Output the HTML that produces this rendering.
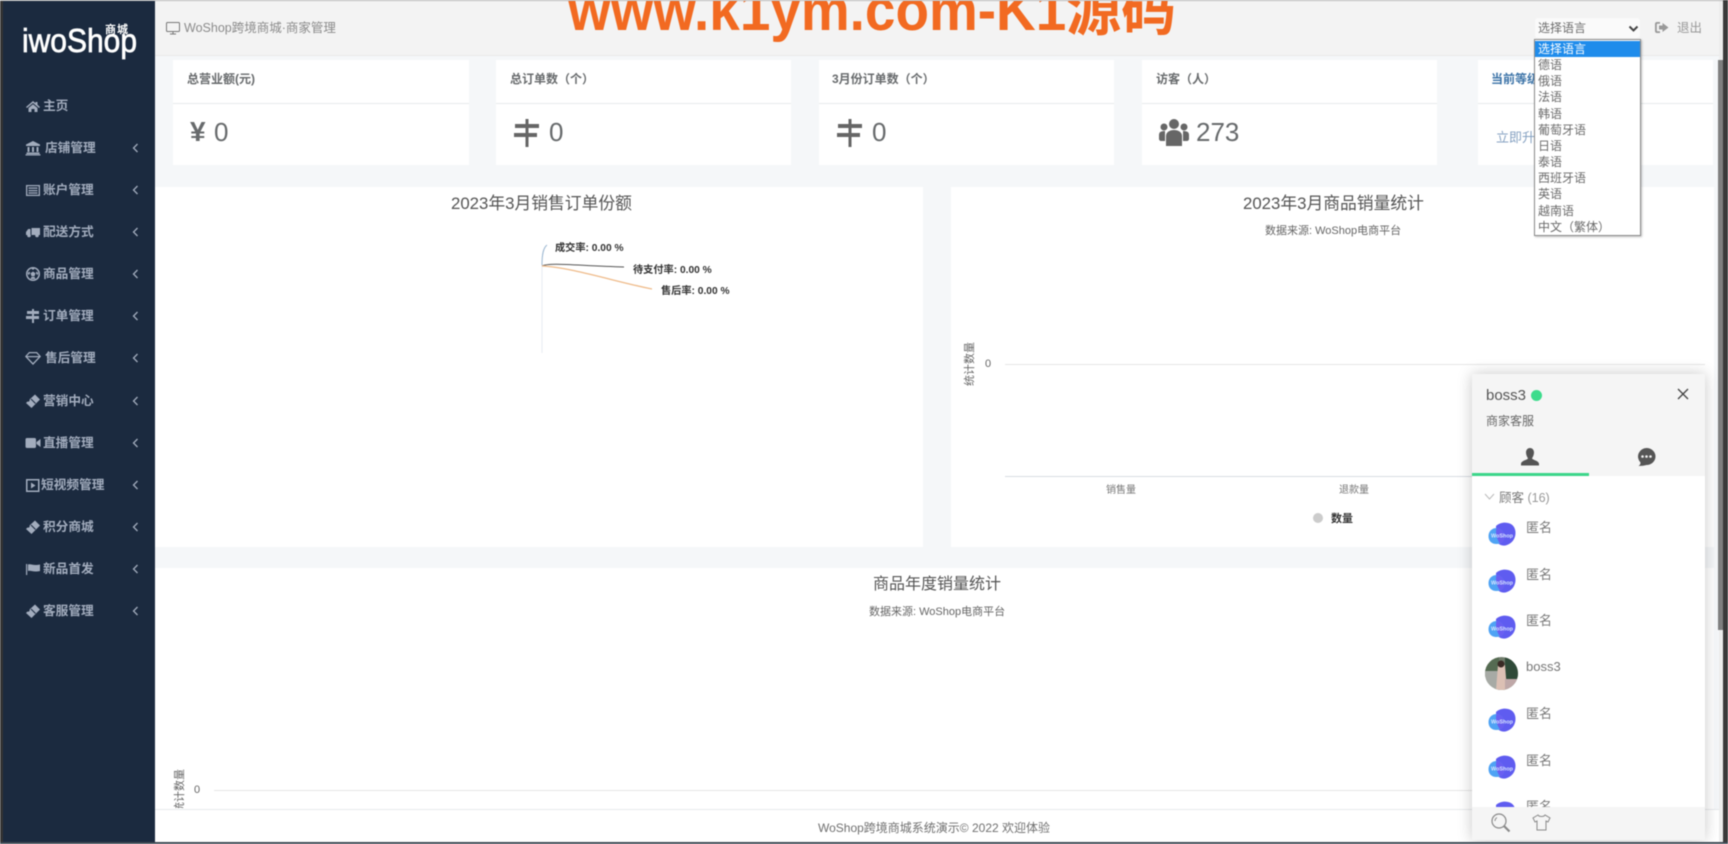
<!DOCTYPE html>
<html lang="zh-CN"><head><meta charset="utf-8"><title>WoShop</title>
<style>
html,body{margin:0;padding:0;width:1728px;height:844px;overflow:hidden;background:#fff}
#w{position:absolute;left:0;top:0;width:1728px;height:844px;overflow:hidden;background:#fff;font-family:"Liberation Sans","Noto Sans CJK SC",sans-serif;color:#676a6c;filter:blur(.45px)}
#w div,#w span.a,#w svg.a{position:absolute}
.t{white-space:nowrap;line-height:18px}
.card{background:#fff}
.m{left:0;width:155px;height:20px;color:#a2acbd;font-size:12.700px;font-weight:700;line-height:20px}
.m svg{position:absolute;left:25px;top:2px;width:16px;height:16px;fill:#a2acbd}
.m span{position:absolute;top:0;white-space:nowrap}
.m svg.c{left:132px;top:5px;width:7px;height:10px;fill:none;stroke:#a2acbd;stroke-width:1.3}
.l{left:0;width:105px;height:16px;line-height:16px;font-size:12px;padding-left:3px;color:#6b6b6b;white-space:nowrap}
.n{left:54px;font-size:13px;color:#777;line-height:16px;white-space:nowrap}
.av{left:16px;width:28px;height:24px}
</style></head><body><div id="w">
<svg width="0" height="0" style="position:absolute"><defs>
<symbol id="home" viewBox="0 0 16 16"><path d="M8 3 1 9l1 1 6-5 6 5 1-1-2.500-2.200V4h-2v1.100zM3.500 10v4h3v-3h3v3h3v-4L8 6.200z"/></symbol>
<symbol id="bank" viewBox="0 0 16 16"><path d="M8 1 1 4.500V6h14V4.500zM2.500 7h2v5h-2zM7 7h2v5H7zM11.500 7h2v5h-2zM1.500 12.500h13V14h-13zM.500 14.300h15V15.500H.500z"/></symbol>
<symbol id="card" viewBox="0 0 16 16"><path fill-rule="evenodd" d="M1 3h14v11H1zM2.300 4.300v8.400h11.400V4.300z"/><path d="M3.500 5.500h9v1.200h-9zM3.500 8h9v1.200h-9zM3.500 10.400h9v1.200h-9z"/></symbol>
<symbol id="truck" viewBox="0 0 16 16"><path d="M6.500 4H15v7H6.500zM1 8l2.200-3H5.500v6H1z"/><circle cx="4" cy="11.500" r="1.800"/><circle cx="12" cy="11.500" r="1.800"/></symbol>
<symbol id="ball" viewBox="0 0 16 16"><path fill-rule="evenodd" d="M8 1a7 7 0 1 0 0 14A7 7 0 0 0 8 1zm0 1.500a5.500 5.500 0 1 1 0 11 5.500 5.500 0 0 1 0-11z"/><path d="M8 5.500 10.500 7.300 9.500 10.300h-3L5.500 7.300zM6.300 2.500h3.400L8 4zM2.600 7l2-1.500.5 1.700-1.500 2zM13.400 7l-2-1.500-.5 1.700 1.500 2zM5.500 13l1-2.100h3l1 2.100z"/></symbol>
<symbol id="sign" viewBox="0 0 16 16"><path d="M7 1h2v14H7zM2 3h12v3H2zM1 8h13v3H1z"/></symbol>
<symbol id="dia" viewBox="0 0 16 16"><path fill-rule="evenodd" d="M4 2h8l4 4.500L8 15 0 6.500zM4.600 3.200 2 6h12l-2.600-2.800zM2.500 7.200 8 13l5.500-5.800z"/></symbol>
<symbol id="tick" viewBox="0 0 16 16"><path d="M10 1.500 15 6.500 6.500 15 1 10l1.500-1.500a1.500 1.500 0 0 0 2-2z"/><path d="M6 6l4.500 4.500" stroke="#1b2a3f" stroke-width="1"/></symbol>
<symbol id="vid" viewBox="0 0 16 16"><rect x="0.500" y="3" width="10.500" height="10" rx="1.500"/><path d="M11.500 7 15.500 4v8l-4-3z"/></symbol>
<symbol id="play" viewBox="0 0 16 16"><path fill-rule="evenodd" d="M1 2h13.500v13H1zM2.500 3.500v10H13v-10z"/><path d="M6 5.500 10.500 8.500 6 11.500z"/></symbol>
<symbol id="flag" viewBox="0 0 16 16"><path d="M1 3h1.200v11H1zM3 3.500c3-1 5 1.500 12 0V10c-7 1.500-9-1-12 0z"/></symbol>
<symbol id="chev" viewBox="0 0 7 10"><path d="M5.500 1 1.500 5l4 4"/></symbol>
<symbol id="blob" viewBox="0 0 28 24"><path fill="#5f5cf0" d="M8 4c3-3 8-4 12-3 5 1 7.500 5 7.500 10 0 6-4 11-10 12.500-5 .5-9.500-2-9.500-7.500z"/><path fill="#4fa3f4" d="M.500 14c0-5 4-8 8-8 5 0 8 5 8 9 0 4-3 7-8 7-5 0-8-3-8-8z"/><path fill="#6a5ff2" d="M8.500 6c5 0 8 5 8 9 0 3-1.500 5.500-4.500 6.500-3-4-5-10-3.500-15.500z"/><text x="3" y="15.500" font-family="'Liberation Sans',sans-serif" font-size="5" font-weight="700" fill="#d6e4ff" textLength="22" lengthAdjust="spacingAndGlyphs">WoShop</text></symbol>
</defs></svg>

<div style="left:0;top:0;width:1723px;height:1px;background:#b5b5b5;z-index:9"></div>
<div style="left:1723px;top:0;width:5px;height:844px;background:#3a3a3a"></div>
<div style="left:0;top:842px;width:1728px;height:2px;background:#3f4a55;z-index:9"></div>

<!-- main -->
<div style="left:155px;top:0;width:1564px;height:55px;background:#f3f3f3;border-bottom:1px solid #e9e9e9"></div>
<div style="left:155px;top:56px;width:1564px;height:754px;background:#f5f7f9"></div>

<!-- sidebar -->
<div style="left:0;top:0;width:3px;height:844px;background:#333"></div>
<div style="left:3px;top:1px;width:152px;height:842px;background:#1b2a3f"></div>
<svg class="a" style="left:18px;top:18px;width:125px;height:48px" viewBox="0 0 125 48">
<text x="4" y="34" font-family="'Liberation Sans',sans-serif" font-size="33" font-weight="400" fill="#fff" stroke="#fff" stroke-width=".7" textLength="115" lengthAdjust="spacingAndGlyphs">iwoShop</text>
<text x="87" y="15" font-family="'Liberation Sans','Noto Sans CJK SC',sans-serif" font-size="11" font-weight="700" fill="#fff" letter-spacing="1">商城</text>
</svg>
<div class="m" style="top:96px"><svg><use href="#home"/></svg><span style="left:43px">主页</span></div>
<div class="m" style="top:138px"><svg><use href="#bank"/></svg><span style="left:45px">店铺管理</span><svg class="c"><use href="#chev"/></svg></div>
<div class="m" style="top:180px"><svg><use href="#card"/></svg><span style="left:43px">账户管理</span><svg class="c"><use href="#chev"/></svg></div>
<div class="m" style="top:222px"><svg><use href="#truck"/></svg><span style="left:43px">配送方式</span><svg class="c"><use href="#chev"/></svg></div>
<div class="m" style="top:264px"><svg><use href="#ball"/></svg><span style="left:43px">商品管理</span><svg class="c"><use href="#chev"/></svg></div>
<div class="m" style="top:306px"><svg><use href="#sign"/></svg><span style="left:43px">订单管理</span><svg class="c"><use href="#chev"/></svg></div>
<div class="m" style="top:348px"><svg><use href="#dia"/></svg><span style="left:45px">售后管理</span><svg class="c"><use href="#chev"/></svg></div>
<div class="m" style="top:391px"><svg><use href="#tick"/></svg><span style="left:43px">营销中心</span><svg class="c"><use href="#chev"/></svg></div>
<div class="m" style="top:433px"><svg><use href="#vid"/></svg><span style="left:43px">直播管理</span><svg class="c"><use href="#chev"/></svg></div>
<div class="m" style="top:475px"><svg><use href="#play"/></svg><span style="left:41px">短视频管理</span><svg class="c"><use href="#chev"/></svg></div>
<div class="m" style="top:517px"><svg><use href="#tick"/></svg><span style="left:43px">积分商城</span><svg class="c"><use href="#chev"/></svg></div>
<div class="m" style="top:559px"><svg><use href="#flag"/></svg><span style="left:43px">新品首发</span><svg class="c"><use href="#chev"/></svg></div>
<div class="m" style="top:601px"><svg><use href="#tick"/></svg><span style="left:43px">客服管理</span><svg class="c"><use href="#chev"/></svg></div>

<!-- header -->
<svg class="a" style="left:166px;top:22px;width:14px;height:13px" viewBox="0 0 14 13" fill="none" stroke="#777" stroke-width="1"><rect x=".5" y=".5" width="13" height="9" rx="1"/><path d="M4 12h6M7 10v2"/></svg>
<div class="t" style="left:184px;top:19px;font-size:12.500px;color:#8b8b8b">WoShop跨境商城·商家管理</div>
<svg class="a" style="left:540px;top:0;width:660px;height:45px;z-index:5"><text x="28" y="30" font-family="'Liberation Sans','Noto Sans CJK SC',sans-serif" font-weight="700" font-size="58" fill="#f26a21" textLength="608" lengthAdjust="spacingAndGlyphs">www.k1ym.com-K1源码</text></svg>

<!-- stat cards -->
<div class="card" style="left:173px;top:60px;width:296px;height:105px"><div class="t" style="left:14px;top:10px;font-size:12px;font-weight:700">总营业额(元)</div><div style="left:0;top:43px;width:296px;height:1px;background:#e7eaec"></div><div class="t" style="left:17px;top:57px;font-size:28px;line-height:30px;font-weight:700;color:#676a6c">¥</div><div class="t" style="left:41px;top:57px;font-size:26px;line-height:30px">0</div></div>
<div class="card" style="left:496px;top:60px;width:295px;height:105px"><div class="t" style="left:14px;top:10px;font-size:12px;font-weight:700">总订单数（个）</div><div style="left:0;top:43px;width:295px;height:1px;background:#e7eaec"></div><svg class="a" style="left:18px;top:58px;width:26px;height:30px;fill:#666" viewBox="0 0 26 30"><path d="M11.500 1h3v28h-3zM1 6h24v4H1zM0 15h23v4H0z"/></svg><div class="t" style="left:53px;top:57px;font-size:26px;line-height:30px">0</div></div>
<div class="card" style="left:819px;top:60px;width:295px;height:105px"><div class="t" style="left:13px;top:10px;font-size:12px;font-weight:700">3月份订单数（个）</div><div style="left:0;top:43px;width:295px;height:1px;background:#e7eaec"></div><svg class="a" style="left:18px;top:58px;width:26px;height:30px;fill:#666" viewBox="0 0 26 30"><path d="M11.500 1h3v28h-3zM1 6h24v4H1zM0 15h23v4H0z"/></svg><div class="t" style="left:53px;top:57px;font-size:26px;line-height:30px">0</div></div>
<div class="card" style="left:1142px;top:60px;width:295px;height:105px"><div class="t" style="left:14px;top:10px;font-size:12px;font-weight:700">访客（人）</div><div style="left:0;top:43px;width:295px;height:1px;background:#e7eaec"></div><svg class="a" style="left:17px;top:58px;width:30px;height:30px;fill:#666" viewBox="0 0 30 30"><circle cx="15" cy="6" r="5"/><circle cx="5" cy="9" r="3.500"/><circle cx="25" cy="9" r="3.500"/><path d="M7 28V18c0-4 4-6 8-6s8 2 8 6v10z"/><path d="M0 21v-4c0-3 2-4 6-4v10H2c-1 0-2-1-2-2zM30 21v-4c0-3-2-4-6-4v10h4c1 0 2-1 2-2z"/></svg><div class="t" style="left:54px;top:57px;font-size:26px;line-height:30px;color:#676a6c">273</div></div>
<div class="card" style="left:1478px;top:60px;width:235px;height:105px"><div class="t" style="left:13px;top:10px;font-size:12px;font-weight:700;color:#3d74a8">当前等级</div><div style="left:0;top:43px;width:235px;height:1px;background:#e7eaec"></div><div class="t" style="left:18px;top:69px;font-size:13px;color:#86a2c2">立即升级</div></div>

<!-- charts -->
<div class="card" style="left:155px;top:187px;width:768px;height:360px"></div>
<div class="t" style="left:451px;top:195px;font-size:16.800px;color:#555">2023年3月销售订单份额</div>
<svg class="a" style="left:530px;top:235px;width:220px;height:125px" fill="none">
<path d="M12 30V118" stroke="#e8ecf2"/>
<path d="M12 30C12 20 13 13 17 10" stroke="#9db8d2"/>
<path d="M12 31C20 27 50 31 94 32" stroke="#555"/>
<path d="M12 31C40 32 90 48 122 54" stroke="#efbb8a" stroke-width="1.300"/>
<g font-family="'Liberation Sans','Noto Sans CJK SC',sans-serif" font-size="10.200" font-weight="700" fill="#333"><text x="25" y="16">成交率: 0.00 %</text><text x="103" y="38">待支付率: 0.00 %</text><text x="131" y="59">售后率: 0.00 %</text></g>
</svg>

<div class="card" style="left:951px;top:187px;width:763px;height:360px"></div>
<div class="t" style="left:1243px;top:195px;font-size:16.800px;color:#555">2023年3月商品销量统计</div>
<div class="t" style="left:1265px;top:222px;font-size:11px;color:#666">数据来源: WoShop电商平台</div>
<div style="left:1005px;top:364px;width:700px;height:1px;background:#e6e6e6"></div>
<div style="left:1005px;top:476px;width:700px;height:1px;background:#d8dce2"></div>
<div class="t" style="left:985px;top:355px;font-size:11px;color:#666">0</div>
<div class="t" style="left:948px;top:355px;width:44px;text-align:center;font-size:11px;color:#666;transform:rotate(-90deg)">统计数量</div>
<div class="t" style="left:1106px;top:482px;font-size:10px;color:#777">销售量</div>
<div class="t" style="left:1339px;top:482px;font-size:10px;color:#777">退款量</div>
<div style="left:1313px;top:513px;width:10px;height:10px;border-radius:50%;background:#ccc"></div>
<div class="t" style="left:1331px;top:510px;font-size:11px;font-weight:700;color:#333">数量</div>

<div class="card" style="left:155px;top:568px;width:1559px;height:241px"></div>
<div class="t" style="left:873px;top:576px;font-size:16px;color:#555">商品年度销量统计</div>
<div class="t" style="left:869px;top:603px;font-size:11px;color:#666">数据来源: WoShop电商平台</div>
<div style="left:214px;top:790px;width:1491px;height:1px;background:#e6e6e6"></div>
<div class="t" style="left:194px;top:781px;font-size:11px;color:#666">0</div>
<div style="left:160px;top:768px;width:40px;height:40px;overflow:hidden"><div class="t" style="left:-2px;top:14px;width:44px;text-align:center;font-size:11px;color:#666;transform:rotate(-90deg)">统计数量</div></div>

<!-- footer -->
<div style="left:155px;top:809px;width:1564px;height:33px;background:#fff;border-top:1px solid #e7eaec"></div>
<div class="t" style="left:818px;top:819px;font-size:12px;color:#707070">WoShop跨境商城系统演示© 2022 欢迎体验</div>

<!-- scrollbar -->
<div style="left:1719px;top:1px;width:4px;height:841px;background:#ededed"></div>
<div style="left:1718px;top:60px;width:5px;height:570px;background:#7f7f7f"></div>

<!-- header right -->
<div style="left:1535px;top:18px;width:105px;height:20px;background:#fafafa;border-radius:3px"></div>
<div class="t" style="left:1538px;top:19px;font-size:12px;color:#6b6b6b">选择语言</div>
<svg class="a" style="left:1628px;top:25px;width:11px;height:8px" viewBox="0 0 11 8" fill="none" stroke="#444" stroke-width="2"><path d="M1.500 1.500 5.500 5.500 9.500 1.500"/></svg>
<svg class="a" style="left:1654px;top:20px;width:15px;height:15px;fill:#999" viewBox="0 0 15 15"><path d="M6 2H3C1.500 2 1 3 1 4v7c0 1 .5 2 2 2h3v-1.800H3.500c-.5 0-.7-.3-.7-.7V4.500c0-.5.2-.7.7-.7H6z"/><path d="M8.500 3 14.500 7.500 8.500 12V9.500H5v-4h3.500z"/></svg>
<div class="t" style="left:1677px;top:19px;font-size:12.500px;color:#999">退出</div>

<!-- dropdown -->
<div style="left:1534px;top:39px;width:107px;height:197px;background:#fff;border:1px solid #8a8a8a;box-sizing:border-box;box-shadow:1px 1px 2px rgba(0,0,0,.25);z-index:6">
<div class="l" style="top:1px;background:#1f8ceb;color:#fff;width:102px">选择语言</div>
<div class="l" style="top:17.150px">德语</div><div class="l" style="top:33.300px">俄语</div><div class="l" style="top:49.450px">法语</div><div class="l" style="top:65.600px">韩语</div><div class="l" style="top:81.750px">葡萄牙语</div><div class="l" style="top:97.900px">日语</div><div class="l" style="top:114.050px">泰语</div><div class="l" style="top:130.200px">西班牙语</div><div class="l" style="top:146.350px">英语</div><div class="l" style="top:162.500px">越南语</div><div class="l" style="top:178.650px">中文（繁体）</div>
</div>

<!-- chat panel -->
<div style="left:1472px;top:374px;width:233px;height:466px;background:#fff;box-shadow:0 0 14px rgba(0,0,0,.22);overflow:hidden;z-index:7">
<div style="left:0;top:0;width:233px;height:102px;background:#f5f5f5"></div>
<div class="t" style="left:14px;top:13px;font-size:15px;color:#555">boss3</div>
<div style="left:59px;top:15.500px;width:11px;height:11px;border-radius:50%;background:#3cdc8c"></div>
<svg class="a" style="left:205px;top:14px;width:12px;height:12px" viewBox="0 0 12 12" fill="none" stroke="#444" stroke-width="1.300"><path d="M1 1 11 11M11 1 1 11"/></svg>
<div class="t" style="left:14px;top:38px;font-size:12px;color:#666">商家客服</div>
<svg class="a" style="left:49px;top:74px;width:18px;height:18px;fill:#555" viewBox="0 0 18 18"><path d="M9 0c2.500 0 4 2 4 4.500S11.800 9 11 10.500c1 1.500 6 2 7 5v2H0v-2c1-3 6-3.500 7-5C6.200 9 5 7 5 4.500S6.500 0 9 0z"/></svg>
<svg class="a" style="left:165px;top:74px;width:19px;height:18px" viewBox="0 0 19 18"><path fill="#555" d="M9.500 0a9 8.500 0 0 1 0 17c-2 .5-5 1-8 1 1.500-1 2-2 2-3.500A8.500 8.500 0 0 1 9.500 0z"/><g fill="#f5f5f5"><circle cx="5.500" cy="8.500" r="1.300"/><circle cx="9.500" cy="8.500" r="1.300"/><circle cx="13.500" cy="8.500" r="1.300"/></g></svg>
<div style="left:0;top:99px;width:117px;height:3px;background:#3cd68a"></div>
<svg class="a" style="left:12px;top:119px;width:11px;height:7px" viewBox="0 0 11 7" fill="none" stroke="#bbb"><path d="M1 1 5.500 6 10 1"/></svg>
<div class="t" style="left:27px;top:115px;font-size:12.500px;color:#777">顾客 <span style="color:#999">(16)</span></div>
<svg class="a av" style="top:148px"><use href="#blob"/></svg><div class="n" style="top:146px">匿名</div>
<svg class="a av" style="top:195px"><use href="#blob"/></svg><div class="n" style="top:193px">匿名</div>
<svg class="a av" style="top:241px"><use href="#blob"/></svg><div class="n" style="top:239px">匿名</div>
<svg class="a" style="left:13px;top:283px;width:33px;height:33px" viewBox="0 0 33 33"><defs><clipPath id="cc"><circle cx="16.500" cy="16.500" r="16.500"/></clipPath></defs><g clip-path="url(#cc)"><rect width="33" height="33" fill="#6f7b6a"/><rect x="20" width="13" height="22" fill="#2f4a38"/><rect y="0" width="14" height="14" fill="#556b52"/><rect y="14" width="14" height="19" fill="#a7aaa5"/><path d="M13 8h7l2 25H11z" fill="#dcc0b4"/><circle cx="16" cy="7" r="3.500" fill="#3a2a25"/><rect x="20" y="22" width="13" height="11" fill="#bfa8a8"/></g></svg><div class="n" style="top:285px">boss3</div>
<svg class="a av" style="top:334px"><use href="#blob"/></svg><div class="n" style="top:332px">匿名</div>
<svg class="a av" style="top:381px"><use href="#blob"/></svg><div class="n" style="top:379px">匿名</div>
<svg class="a av" style="top:427px"><use href="#blob"/></svg><div class="n" style="top:425px">匿名</div>
<div style="left:0;top:433px;width:233px;height:33px;background:#f5f5f5"></div>
<svg class="a" style="left:19px;top:439px;width:20px;height:20px" viewBox="0 0 20 20" fill="none" stroke="#8a8a8a"><circle cx="8" cy="8" r="7" stroke-width="1.200"/><path d="M13 13 18.500 18.500" stroke-width="2.200"/><path d="M4 8a4 4 0 0 1 2-3.400"/></svg>
<svg class="a" style="left:60px;top:440px;width:19px;height:17px" viewBox="0 0 19 17" fill="none" stroke="#8a8a8a"><path d="M6 1 1 4l2 4 2-1v9h9V7l2 1 2-4-5-3c-1 2-6 2-7 0z"/></svg>
</div>
</div></body></html>
